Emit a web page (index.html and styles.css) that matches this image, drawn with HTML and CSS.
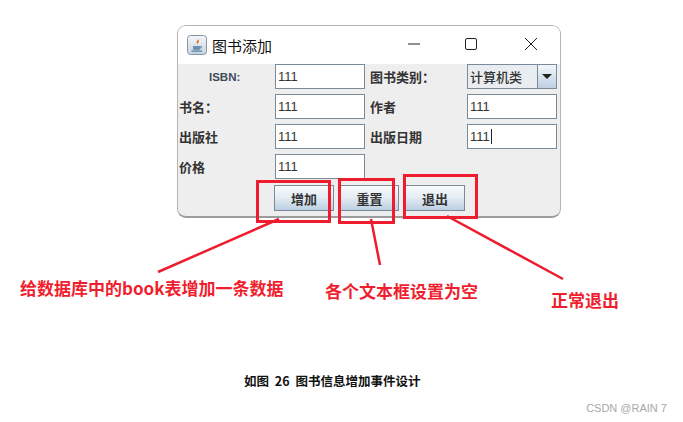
FILE: index.html
```html
<!DOCTYPE html>
<html lang="en">
<head>
    <meta charset="UTF-8">
    <meta name="viewport" content="width=device-width, initial-scale=1.0">
    <title>图书添加</title>
    <link rel="stylesheet" href="styles.css">
</head>
<body>
    <div class="window">
        <div class="titlebar">
            <svg class="java-icon" width="20" height="20" viewBox="0 0 20 20">
                <defs>
                    <linearGradient id="icon-bg" x1="0" y1="0" x2="0" y2="1">
                        <stop offset="0" stop-color="#f4f7fa"/>
                        <stop offset="1" stop-color="#c4d3e2"/>
                    </linearGradient>
                </defs>
                <rect x="0.5" y="0.5" width="19" height="19" rx="3" fill="url(#icon-bg)" stroke="#8795a3"/>
                <path d="M10.5 3.5c1.5 2-2 3-.5 5 .4.5.5 1 .3 1.5-.2-2.500 2.700-2.700 1.200-5-.2-.5-.6-1-1-1.500z" fill="#e2661a"/>
                <path d="M6 11h7v2.500c0 1-1 1.500-2 1.500H8c-1 0-2-.5-2-1.500z" fill="#6f8fb2"/>
                <path d="M13 11.500h1.500v1.500H13" fill="none" stroke="#6f8fb2"/>
                <rect x="4.500" y="15.500" width="10.500" height="1.200" fill="#5b7a9c"/>
            </svg>
            <span class="title">图书添加</span>
            <div class="win-controls">
                <svg width="14" height="14" viewBox="0 0 14 14"><path d="M1 7h12" stroke="#222" fill="none"/></svg>
                <svg width="14" height="14" viewBox="0 0 14 14"><rect x="1.500" y="1.500" width="11" height="11" rx="1.500" stroke="#222" fill="none"/></svg>
                <svg class="win-close" width="14" height="14" viewBox="0 0 14 14"><path d="M1 1l12 12M13 1L1 13" stroke="#222" fill="none"/></svg>
            </div>
        </div>
        <div class="content">
            <div class="form-grid">
                <label class="isbn">ISBN:</label>
                <div class="field">111</div>
                <label class="second">图书类别：</label>
                <div class="combo">
                    <span class="combo-value">计算机类</span>
                    <span class="combo-arrow"></span>
                </div>

                <label>书名：</label>
                <div class="field">111</div>
                <label class="second">作者</label>
                <div class="field">111</div>

                <label>出版社</label>
                <div class="field">111</div>
                <label class="second">出版日期</label>
                <div class="field"><span class="caret">111</span></div>

                <label>价格</label>
                <div class="field">111</div>
            </div>
            <div class="buttons">
                <button class="btn-add">增加</button>
                <button class="btn-reset">重置</button>
                <button class="btn-exit">退出</button>
            </div>
        </div>
    </div>

    <!-- red annotations drawn over the screenshot -->
    <div class="mark mark-add"></div>
    <div class="mark mark-reset"></div>
    <div class="mark mark-exit"></div>
    <svg class="arrows" width="683" height="422" viewBox="0 0 683 422">
        <path d="M279 219L158 272M371 219L380 265M447 216L563 279" stroke="#ee1c2e" stroke-width="2.500" fill="none"/>
    </svg>
    <div class="note note-add">给数据库中的book表增加一条数据</div>
    <div class="note note-reset">各个文本框设置为空</div>
    <div class="note note-exit">正常退出</div>

    <p class="caption">如图 26 图书信息增加事件设计</p>
    <p class="watermark">CSDN @RAIN 7</p>
</body>
</html>
```

FILE: styles.css
```css
html, body { margin: 0; padding: 0; background: #fff; }
body { position: relative; width: 683px; height: 422px; overflow: hidden; font-family: "Noto Sans CJK SC", "Liberation Sans", sans-serif; }

.window { box-sizing: border-box; width: 384px; height: 193px; margin: 25px 0 0 177px; border: 1px solid #b4b4b4; border-bottom: 2px solid #9c9c9c; border-radius: 9px; overflow: hidden; background: #eee; }
.titlebar { display: flex; align-items: center; height: 38px; padding-left: 9px; background: #fff; }
.java-icon { flex: none; }
.title { margin-left: 5px; font-size: 15px; color: #111; }
.win-controls { display: flex; gap: 43px; margin-left: 135px; padding-bottom: 3px; }
.win-controls svg { display: block; }
.win-controls .win-close { margin-left: 3px; }

.form-grid { display: grid; grid-template-columns: 97px 90px 102px 90px; grid-auto-rows: 25px; row-gap: 5px; }
.form-grid label { display: flex; align-items: center; padding-left: 1px; font-size: 13px; font-weight: 700; color: #333; }
.form-grid label.isbn { padding-left: 31px; font-family: "Liberation Sans", sans-serif; font-size: 11.500px; color: #3f4a5a; }
.form-grid label.second { padding-left: 5px; }

.field { box-sizing: border-box; display: flex; align-items: center; padding-left: 2px; background: #fff; border: 1px solid #7a8a99; font-family: "Liberation Sans", sans-serif; font-size: 13px; color: #333; }
.caret { padding-right: 1px; border-right: 1px solid #222; }

.combo { box-sizing: border-box; display: flex; border: 1px solid #7a8a99; }
.combo-value { flex: 1; display: flex; align-items: center; padding-left: 2px; background: #e9edf2; border-right: 1px solid #7a8a99; font-size: 13px; font-weight: 500; color: #333; }
.combo-arrow { position: relative; width: 18px; background: linear-gradient(#f2f6fa, #bed0e2); }
.combo-arrow::after { content: ""; position: absolute; left: 4px; top: 9px; border: 5px solid transparent; border-top: 5px solid #222; border-bottom: 0; }

.buttons { display: flex; gap: 6px; padding: 6px 0 0 96px; }
.buttons button { box-sizing: border-box; height: 26px; padding: 0; border: 1px solid #7a8a99; background: linear-gradient(#f8fafc, #e6edf4 45%, #bccfe2); font-family: "Noto Sans CJK SC", sans-serif; font-size: 13px; font-weight: 700; color: #333; }
.btn-add, .btn-exit { width: 60px; }
.btn-reset { width: 59px; }

.mark { position: absolute; box-sizing: border-box; border: 3px solid #ee1c2e; }
.mark-add { left: 256px; top: 180px; width: 75px; height: 43px; }
.mark-reset { left: 338px; top: 178px; width: 57px; height: 46px; }
.mark-exit { left: 403px; top: 174px; width: 75px; height: 45px; }
.arrows { position: absolute; left: 0; top: 0; }

.note { position: absolute; font-size: 17px; line-height: 20px; font-weight: 700; color: #f01f30; white-space: nowrap; }
.note-add { left: 20px; top: 278px; }
.note-reset { left: 325px; top: 281px; }
.note-exit { left: 551px; top: 290px; }

.caption { position: absolute; left: 244px; top: 373px; margin: 0; font-size: 12.500px; line-height: 16px; font-weight: 700; word-spacing: 3px; color: #111; }
.watermark { position: absolute; right: 16px; top: 401px; margin: 0; font-family: "Liberation Sans", sans-serif; font-size: 11px; line-height: 14px; color: #a8a8a8; }
```
